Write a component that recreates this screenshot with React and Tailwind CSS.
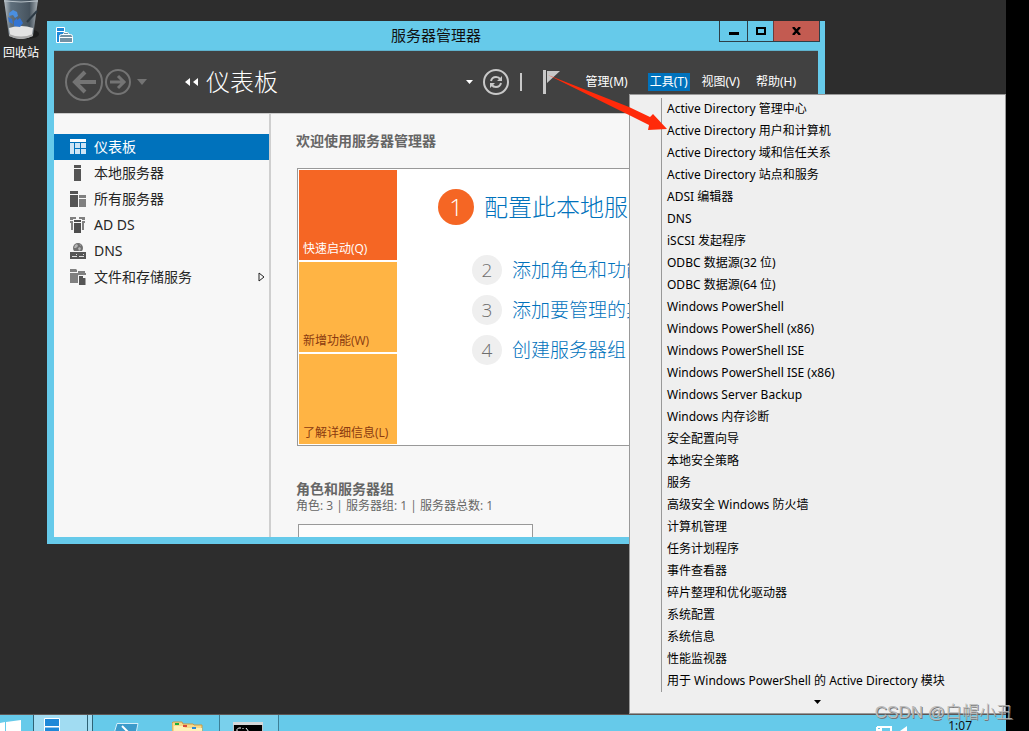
const sidebarItems = [
  { label: "仪表板", icon: DashboardIcon, active: true },
  { label: "本地服务器", icon: LocalServerIcon },
  { label: "所有服务器", icon: AllServersIcon },
  { label: "AD DS", icon: DirectoryIcon },
  { label: "DNS", icon: DnsIcon },
  { label: "文件和存储服务", icon: StorageIcon, expandable: true },
];

const tools = [
  "Active Directory 管理中心",
  "Active Directory 用户和计算机",
  "Active Directory 域和信任关系",
  "Active Directory 站点和服务",
  "ADSI 编辑器",
  "DNS",
  "iSCSI 发起程序",
  "ODBC 数据源(32 位)",
  "ODBC 数据源(64 位)",
  "Windows PowerShell",
  "Windows PowerShell (x86)",
  "Windows PowerShell ISE",
  "Windows PowerShell ISE (x86)",
  "Windows Server Backup",
  "Windows 内存诊断",
  "安全配置向导",
  "本地安全策略",
  "服务",
  "高级安全 Windows 防火墙",
  "计算机管理",
  "任务计划程序",
  "事件查看器",
  "碎片整理和优化驱动器",
  "系统配置",
  "系统信息",
  "性能监视器",
  "用于 Windows PowerShell 的 Active Directory 模块",
];

const steps = [
  { number: 2, label: "添加角色和功能" },
  { number: 3, label: "添加要管理的其他服务器" },
  { number: 4, label: "创建服务器组" },
];

function DashboardIcon() {
  return (
    <svg width="16" height="16" shapeRendering="crispEdges" aria-hidden="true">
      <path fill="#fff" d="M0 0h16v3H0z" />
      <path fill="#cfe5f5" d="M0 4h4v11H0zM5 4h5v5H5zM11 4h5v5h-5zM5 10h5v5H5zM11 10h5v5h-5z" />
    </svg>
  );
}

function LocalServerIcon() {
  return (
    <svg width="16" height="16" shapeRendering="crispEdges" aria-hidden="true">
      <path fill="#555" d="M4 0h7v3H4zM4 4h7v12H4z" />
    </svg>
  );
}

function AllServersIcon() {
  return (
    <svg width="16" height="16" shapeRendering="crispEdges" aria-hidden="true">
      <path fill="#555" d="M0 0h8v3H0zM0 4h8v12H0z" />
      <path fill="#808080" d="M9 4h7v3H9zM9 8h7v8H9z" />
    </svg>
  );
}

function DirectoryIcon() {
  return (
    <svg width="16" height="16" shapeRendering="crispEdges" aria-hidden="true">
      <path fill="#808080" d="M0 0h6v2H3v1H0zM9 0h6v3h-3V2H9zM0 4h3v9H1V6H0zM12 4h3v2h-1v7h-2z" />
      <path fill="#4d4d4d" d="M4 3h7v2H4zM4 6h7v10H4z" />
    </svg>
  );
}

function DnsIcon() {
  return (
    <svg width="16" height="16" aria-hidden="true">
      <circle cx="8" cy="5" r="5" fill="#707070" />
      <path fill="#b5b5b5" d="M5 2l2-1 1 2-2 2-2 0zM8 5l2-1 1 2-2 2zM9 1l2 1v1z" />
      <path fill="#f7f7f7" d="M0 8h16v1H0z" />
      <path fill="#555" d="M0 9h16v7H0z" />
      <path stroke="#ddd" d="M2 13.500h5M9 13.500h5M6.500 11v1M13.500 11v1" />
    </svg>
  );
}

function StorageIcon() {
  return (
    <svg width="16" height="16" aria-hidden="true">
      <path fill="#808080" d="M0 0h6l1 1v2H0zM0 4h16v2H8v8H0z" />
      <path fill="#808080" d="M8 2h7v2H8z" />
      <path fill="#555" stroke="#f7f7f7" d="M8.500 6.500h4.500l3 3V16.500H8.500z" />
      <path fill="#f7f7f7" d="M13 6v3h3z" />
    </svg>
  );
}

function RecycleBin() {
  return (
    <button type="button" className="absolute top-0 left-0 flex w-[42px] flex-col items-center text-xs text-white">
      <svg width="42" height="42" aria-hidden="true">
        <defs>
          <linearGradient id="bin">
            <stop offset="0" stopColor="#b9c0c6" />
            <stop offset=".2" stopColor="#60707d" />
            <stop offset=".75" stopColor="#46535e" />
            <stop offset="1" stopColor="#a9b0b5" />
          </linearGradient>
        </defs>
        <ellipse cx="26" cy="34" rx="13" ry="5" fill="#1d1d1d" />
        <path fill="url(#bin)" d="M4 0h34l-5 36q-12 6-24 0z" />
        <path fill="#e3e3e3" d="M9 28q12-4 24 0l-1 8q-11 6-22 0z" />
        <path fill="#aaa" d="M9 34q12 5 24 0v2q-12 6-24 0z" />
        <path stroke="#b7c1c8" fill="none" d="M4 1q17 2 34 0" />
        <path fill="#4a8fe0" d="M9 13l4-3 4 2 1 4-3 2-2-3-4 1z" />
        <path fill="#3474d2" d="M8 17l4 2 1 5-4-2zM14 21l3-3v2l3-2 3 5-3 4-6-1z" />
        <path stroke="#2d3a45" strokeWidth="2" d="M27 22l10-11" />
      </svg>
      <span className="leading-[22px]">回收站</span>
    </button>
  );
}

function TitleBar() {
  return (
    <header className="grid h-[30px] grid-cols-[1fr_auto_1fr] items-start border-b border-[#5fb2cd]">
      <svg className="mt-[6px] ml-[2px] w-[17px]" height="17" aria-hidden="true">
        <path fill="#1e88d8" stroke="#fff" d="M.5.5h8v15h-8z" />
        <path stroke="#fff" d="M1 4.500h7" />
        <path fill="#7392a5" stroke="#fff" d="M3.500 9.500q0-2 2-2h9q2 0 2 2v6h-13zM7.500 7.500v-1q0-1 1-1h3q1 0 1 1v1M4 10.500h12" />
      </svg>
      <h1 className="text-[15px] leading-7 text-[#111]">服务器管理器</h1>
      <div className="-mr-[2px] flex h-[21px] justify-self-end border border-t-0 border-[#2d3f48]">
        <button type="button" aria-label="最小化" className="flex w-[27px] items-center justify-center">
          <svg width="10" height="10" aria-hidden="true"><path d="M0 6h10v3H0z" /></svg>
        </button>
        <button type="button" aria-label="最大化" className="flex w-[26px] items-center justify-center border-l border-[#2d3f48]">
          <svg width="10" height="8" aria-hidden="true"><path fill="none" stroke="#000" strokeWidth="2" d="M1 1h8v6H1z" /></svg>
        </button>
        <button type="button" aria-label="关闭" className="flex w-[46px] items-center justify-center border-l border-[#6b3b3b] bg-[#c35b51]">
          <svg width="9" height="8" aria-hidden="true"><path stroke="#000" strokeWidth="2.400" d="M1 0l7 8M8 0L1 8" /></svg>
        </button>
      </div>
    </header>
  );
}

function Toolbar() {
  return (
    <div className="flex h-[62px] shrink-0 items-center bg-[#414141] text-xs text-white">
      <button type="button" aria-label="后退" className="ml-[11px]">
        <svg width="38" height="38" fill="none" stroke="#747474" aria-hidden="true">
          <circle cx="19" cy="19" r="18" strokeWidth="2" />
          <path strokeWidth="4" d="M9 19h22M20 9L10 19l10 10" />
        </svg>
      </button>
      <button type="button" aria-label="前进" className="ml-[2px]">
        <svg width="26" height="26" fill="none" stroke="#747474" aria-hidden="true">
          <circle cx="13" cy="13" r="12" strokeWidth="2" />
          <path strokeWidth="3" d="M5 13h15M13 7l6 6-6 6" />
        </svg>
      </button>
      <button type="button" aria-label="历史记录" className="ml-[6px]">
        <svg width="10" height="6" aria-hidden="true"><path fill="#747474" d="M0 0h10L5 6z" /></svg>
      </button>
      <svg className="ml-[38px]" width="13" height="8" aria-hidden="true">
        <path fill="#fff" d="M5 0v8L0 4zM13 0v8L8 4z" />
      </svg>
      <h2 className="ml-2 flex-1 text-2xl font-light">仪表板</h2>
      <button type="button" aria-label="选择页面">
        <svg width="7" height="4" aria-hidden="true"><path fill="#fff" d="M0 0h7L3.500 4z" /></svg>
      </button>
      <button type="button" aria-label="刷新" className="ml-[10px]">
        <svg width="26" height="26" fill="none" stroke="#c8c8c8" aria-hidden="true">
          <circle cx="13" cy="13" r="12" strokeWidth="2" />
          <path strokeWidth="2" d="M8 12q1-4 5-4 3 0 4 2M18 14q-1 4-5 4-3 0-4-2" />
          <path fill="#c8c8c8" stroke="none" d="M19 7v5h-5zM7 19v-5h5z" />
        </svg>
      </button>
      <span className="ml-[11px] h-[18px] w-[2px] bg-[#c8c8c8]" />
      <button type="button" aria-label="通知" className="ml-5">
        <svg width="18" height="24" aria-hidden="true"><path fill="#c8c8c8" d="M1 0h3v24H1zM5 1h13L5 13z" /></svg>
      </button>
      <nav className="mr-[22px] ml-[26px] flex gap-3 whitespace-nowrap">
        <button type="button" className="mr-2 h-[18px] leading-[18px]">管理(M)</button>
        <button type="button" aria-expanded="true" className="h-[18px] bg-[#0072bc] px-[2px] leading-[18px]">工具(T)</button>
        <button type="button" className="h-[18px] leading-[18px]">视图(V)</button>
        <button type="button" className="ml-1 h-[18px] leading-[18px]">帮助(H)</button>
      </nav>
    </div>
  );
}

function Sidebar() {
  return (
    <nav className="w-[217px] shrink-0 border-r-2 border-[#cfcfcf] pt-5">
      {sidebarItems.map(({ label, icon: Icon, active, expandable }) => (
        <button
          key={label}
          type="button"
          className={`flex h-[26px] w-full items-center gap-2 pr-1 pl-4 text-sm ${
            active ? "bg-[#0072bc] text-white" : "text-[#262626]"
          }`}
        >
          <Icon />
          <span className="flex-1 text-left">{label}</span>
          {expandable ? (
            <svg width="7" height="10" aria-hidden="true"><path fill="none" stroke="#222" d="M1 1l5 4-5 4z" /></svg>
          ) : null}
        </button>
      ))}
    </nav>
  );
}

function Welcome() {
  return (
    <div className="mt-[17px] flex border border-[#999] bg-white p-px">
      <div className="flex w-[98px] shrink-0 flex-col gap-[2px] text-xs text-[#8a3a10]">
        <button type="button" className="flex h-[90px] items-end bg-[#f56624] px-1 pb-[3px] text-white">快速启动(Q)</button>
        <button type="button" className="flex h-[90px] items-end bg-[#ffb444] px-1 pb-[3px]">新增功能(W)</button>
        <button type="button" className="flex h-[90px] items-end bg-[#ffb444] px-1 pb-[3px]">了解详细信息(L)</button>
      </div>
      <div className="pt-[19px] pl-[41px] font-light whitespace-nowrap text-[#0072bc]">
        <a href="#configure" className="flex items-center gap-[10px] text-2xl leading-9">
          <span className="flex size-9 items-center justify-center rounded-full bg-[#f56624] text-white">1</span>
          配置此本地服务器
        </a>
        <ul className="mt-[30px] grid gap-[10px] pl-[34px]">
          {steps.map((step) => (
            <li key={step.number}>
              <a href={`#step-${step.number}`} className="flex items-center gap-[10px] text-[19px] leading-[30px]">
                <span className="flex size-[30px] items-center justify-center rounded-full bg-[#efefef] text-[#6d6d6d]">
                  {step.number}
                </span>
                {step.label}
              </a>
            </li>
          ))}
        </ul>
      </div>
    </div>
  );
}

function ServerManager() {
  return (
    <section className="absolute top-[21px] left-[47px] flex h-[523px] w-[778px] flex-col bg-[#66caea] px-[7px] pb-[7px]">
      <TitleBar />
      <Toolbar />
      <div className="flex min-h-0 flex-1 overflow-hidden border-t border-[#ccc] bg-[#f7f7f7]">
        <Sidebar />
        <main className="min-w-0 flex-1 pt-[17px] pl-[26px] font-['Open_Sans','Noto_Sans_CJK_SC',sans-serif] text-[#666]">
          <h3 className="-ml-px text-sm leading-5 font-bold">欢迎使用服务器管理器</h3>
          <Welcome />
          <h3 className="mt-[33px] -ml-px text-sm leading-5 font-bold">角色和服务器组</h3>
          <p className="-ml-px text-xs leading-[14px]">角色: 3 | 服务器组: 1 | 服务器总数: 1</p>
          <div className="mt-[11px] ml-px h-20 w-[235px] border border-[#999] bg-[#fcfcfc]" />
        </main>
      </div>
    </section>
  );
}

function ToolsMenu() {
  return (
    <div className="absolute top-[94px] right-0 left-[629px] border border-[#999] bg-[#efefef] pt-[3px] pb-[9px] pl-[31px]">
      <ul role="menu" className="border-l border-[#999] text-xs text-black">
        {tools.map((tool) => (
          <li key={tool} role="none">
            <button type="button" role="menuitem" className="block h-[22px] w-full pl-[5px] text-left leading-[22px] whitespace-nowrap">
              {tool}
            </button>
          </li>
        ))}
      </ul>
      <button type="button" aria-label="向下滚动" className="mx-auto mt-2 block pr-8">
        <svg width="7" height="4" aria-hidden="true"><path d="M0 0h7L3.500 4z" /></svg>
      </button>
    </div>
  );
}

function Taskbar() {
  return (
    <footer className="absolute inset-x-0 bottom-0 flex h-[17px] items-start overflow-hidden border-t border-[#5d5654] bg-[#66caea]">
      <button type="button" aria-label="开始" className="w-[33px]">
        <svg width="22" height="17" aria-hidden="true"><path fill="#fff" d="M0 8l5-1v10H0zM6 7l15-2v12H6z" /></svg>
      </button>
      <button type="button" aria-label="服务器管理器" className="h-full w-[55px] border-x border-[#2f6275] bg-[#a1dcf2] pl-[10px]">
        <svg width="17" height="17" className="block" aria-hidden="true"><path fill="#1e88d8" stroke="#fff" d="M.5 3.500h15v8H.5zM.5 12h15v8H.5z" /></svg>
      </button>
      <span className="h-full w-[5px] border-r border-[#2f6275] bg-[#a1dcf2]" />
      <button type="button" aria-label="Windows PowerShell" className="w-[63px] pl-[21px]">
        <svg width="26" height="17" aria-hidden="true">
          <path fill="#3c9bcb" stroke="#d5effa" d="M3 8.500h21l-2 10H0z" />
          <path stroke="#fff" strokeWidth="2" d="M8 11l6 6" />
        </svg>
      </button>
      <button type="button" aria-label="文件资源管理器" className="w-[63px] pl-4">
        <svg width="32" height="17" aria-hidden="true">
          <path fill="#f6d98a" stroke="#c99b45" d="M0 8l1-1h9l1 2h10l1 1h8v8H0z" />
          <path fill="#fff1b8" d="M2 11h9l2 2h17v5H2z" />
          <path fill="#1fae3c" d="M3 8h4v2H3z" />
          <path fill="#d94a3a" d="M11 10h4v2h-4z" />
          <path fill="#2d8bd6" d="M20 12h4v2h-4z" />
        </svg>
      </button>
      <button type="button" aria-label="命令提示符" className="h-full w-[60px] border-x border-[#3d7f96] bg-[#79d0ec] pl-[13px]">
        <svg width="30" height="17" className="block" aria-hidden="true">
          <path fill="#000" stroke="#bfc5c8" d="M.5 7.500h29v12H.5z" />
          <path fill="#d5d8da" d="M0 7h30v3H0z" />
          <path stroke="#fff" fill="none" d="M8 13H5.500L4 14.500V17M10 13v1M10 16v1M13 13l3 4" />
        </svg>
      </button>
      <div className="ml-auto flex gap-3 pr-[34px]">
        <svg width="34" height="17" className="mr-[26px]" aria-hidden="true">
          <path fill="#66caea" stroke="#fff" strokeWidth="2" d="M1 12h14v8H5V13M1 12v3h4" />
          <path fill="#fff" d="M31 11v5h-7z" />
        </svg>
        <time className="mt-[3px] text-xs leading-4 text-[#111]">1:07</time>
      </div>
    </footer>
  );
}

function PointerArrow() {
  return (
    <svg className="pointer-events-none absolute top-[74px] left-[548px]" width="120" height="58" aria-hidden="true">
      <path fill="#ff2a0a" d="M0 1L81 33l21 10 3-3 14 15-19 1 1-5-20-10z" />
    </svg>
  );
}

function App() {
  return (
    <div className="flex h-screen overflow-hidden bg-black font-['Noto_Sans','Noto_Sans_CJK_SC',sans-serif]">
      <div className="relative mr-[23px] flex-1 bg-[#2d2d2d]">
        <RecycleBin />
        <ServerManager />
        <Taskbar />
        <ToolsMenu />
        <PointerArrow />
        <p className="absolute -right-[7px] bottom-[6px] font-['Liberation_Sans','Noto_Sans_CJK_SC',sans-serif] text-[17px] leading-6 font-light whitespace-nowrap text-[#bbb] [text-shadow:1px_1px_0_#777]">
          CSDN @白帽小丑
        </p>
      </div>
    </div>
  );
}

export default App;
